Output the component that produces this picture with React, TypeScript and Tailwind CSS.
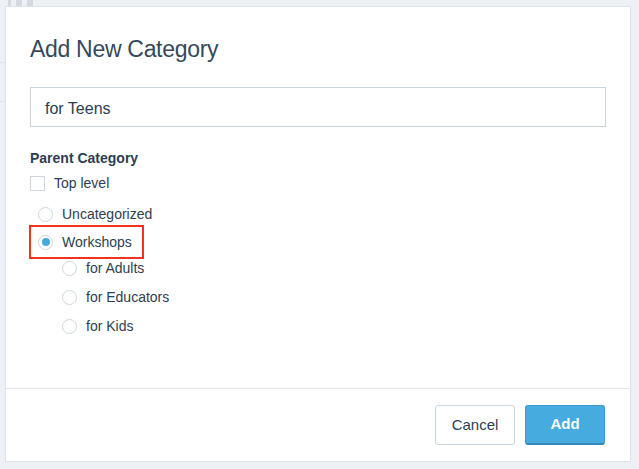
import { useState } from 'react';

const font = { fontFamily: '"Liberation Sans", Arial, sans-serif' };

const Radio = ({ checked }: { checked?: boolean }) => (
  <span className="w-[15px] h-[15px] rounded-full border border-[#cbd6df] bg-white flex items-center justify-center shrink-0">
    {checked && <span className="w-[8px] h-[8px] rounded-full bg-[#45a9df]" />}
  </span>
);

const children = ['for Adults', 'for Educators', 'for Kids'];

const App = () => {
  const [name, setName] = useState('for Teens');

  return (
    <div
      className="relative w-[639px] h-[469px] overflow-hidden bg-[#edf0f4] pl-[5px] pt-[6px] text-[#2d3e4f]"
      style={font}
    >
      {/* page behind the dialog */}
      <div className="absolute top-0 left-[8px] flex gap-[5px]">
        <span className="w-[3px] h-[6px] bg-[#d3d9e0]" />
        <span className="w-[6px] h-[6px] bg-[#d3d9e0]" />
        <span className="w-[6px] h-[6px] bg-[#d3d9e0]" />
      </div>
      <div className="absolute left-0 top-[62px] w-[5px] h-px bg-[#dde3e9]" />
      <div className="absolute left-0 top-[101px] w-[5px] h-px bg-[#dde3e9]" />

      <div className="relative w-[626px] h-[456px] bg-white border border-[#dbe2e9] flex flex-col">
        <div className="flex-1 px-[24px] pt-[28px]">
          <h1 className="text-[23px] leading-[28px] font-normal tracking-[-0.3px] text-[#34495c]">Add New Category</h1>

          <input
            value={name}
            onChange={(e) => setName(e.target.value)}
            className="mt-[24px] w-full h-[40px] border border-[#c9d5df] pl-[14px] pt-[3px] text-[16px] text-[#2d3e4f] outline-none"
            style={font}
          />

          <div className="mt-[21px] text-[14px] leading-[20px] font-bold">Parent Category</div>

          <label className="mt-[5px] flex items-center h-[20px] gap-[9px] text-[14px]">
            <span className="w-[15px] h-[15px] border border-[#cbd6df] bg-white shrink-0" />
            Top level
          </label>

          <div className="mt-[11px] ml-[8px] flex items-center h-[20px] gap-[9px] text-[14px]">
            <Radio />
            Uncategorized
          </div>

          <div className="mt-[1px] -ml-[1px] w-[115px] h-[34px] border-2 border-[#f0321e] flex items-center pl-[7px] gap-[9px] text-[14px]">
            <Radio checked />
            Workshops
          </div>

          <div className="-mt-[1px] ml-[32px] flex flex-col gap-[9px]">
            {children.map((c) => (
              <div key={c} className="flex items-center h-[20px] gap-[9px] text-[14px]">
                <Radio />
                {c}
              </div>
            ))}
          </div>
        </div>

        <div className="h-[73px] border-t border-[#e1e7ed] flex justify-end gap-[10px] pt-[16px] pr-[25px]">
          <button className="w-[80px] h-[40px] rounded-[3px] border border-[#c9d5df] bg-white text-[15px] text-[#2d3e4f]">
            Cancel
          </button>
          <button className="w-[80px] h-[40px] rounded-[3px] bg-[#46abdf] border border-[#3c9bcf] border-b-[2px] border-b-[#3589b9] text-[15px] font-bold text-white">
            Add
          </button>
        </div>
      </div>
    </div>
  );
};

export default App;
